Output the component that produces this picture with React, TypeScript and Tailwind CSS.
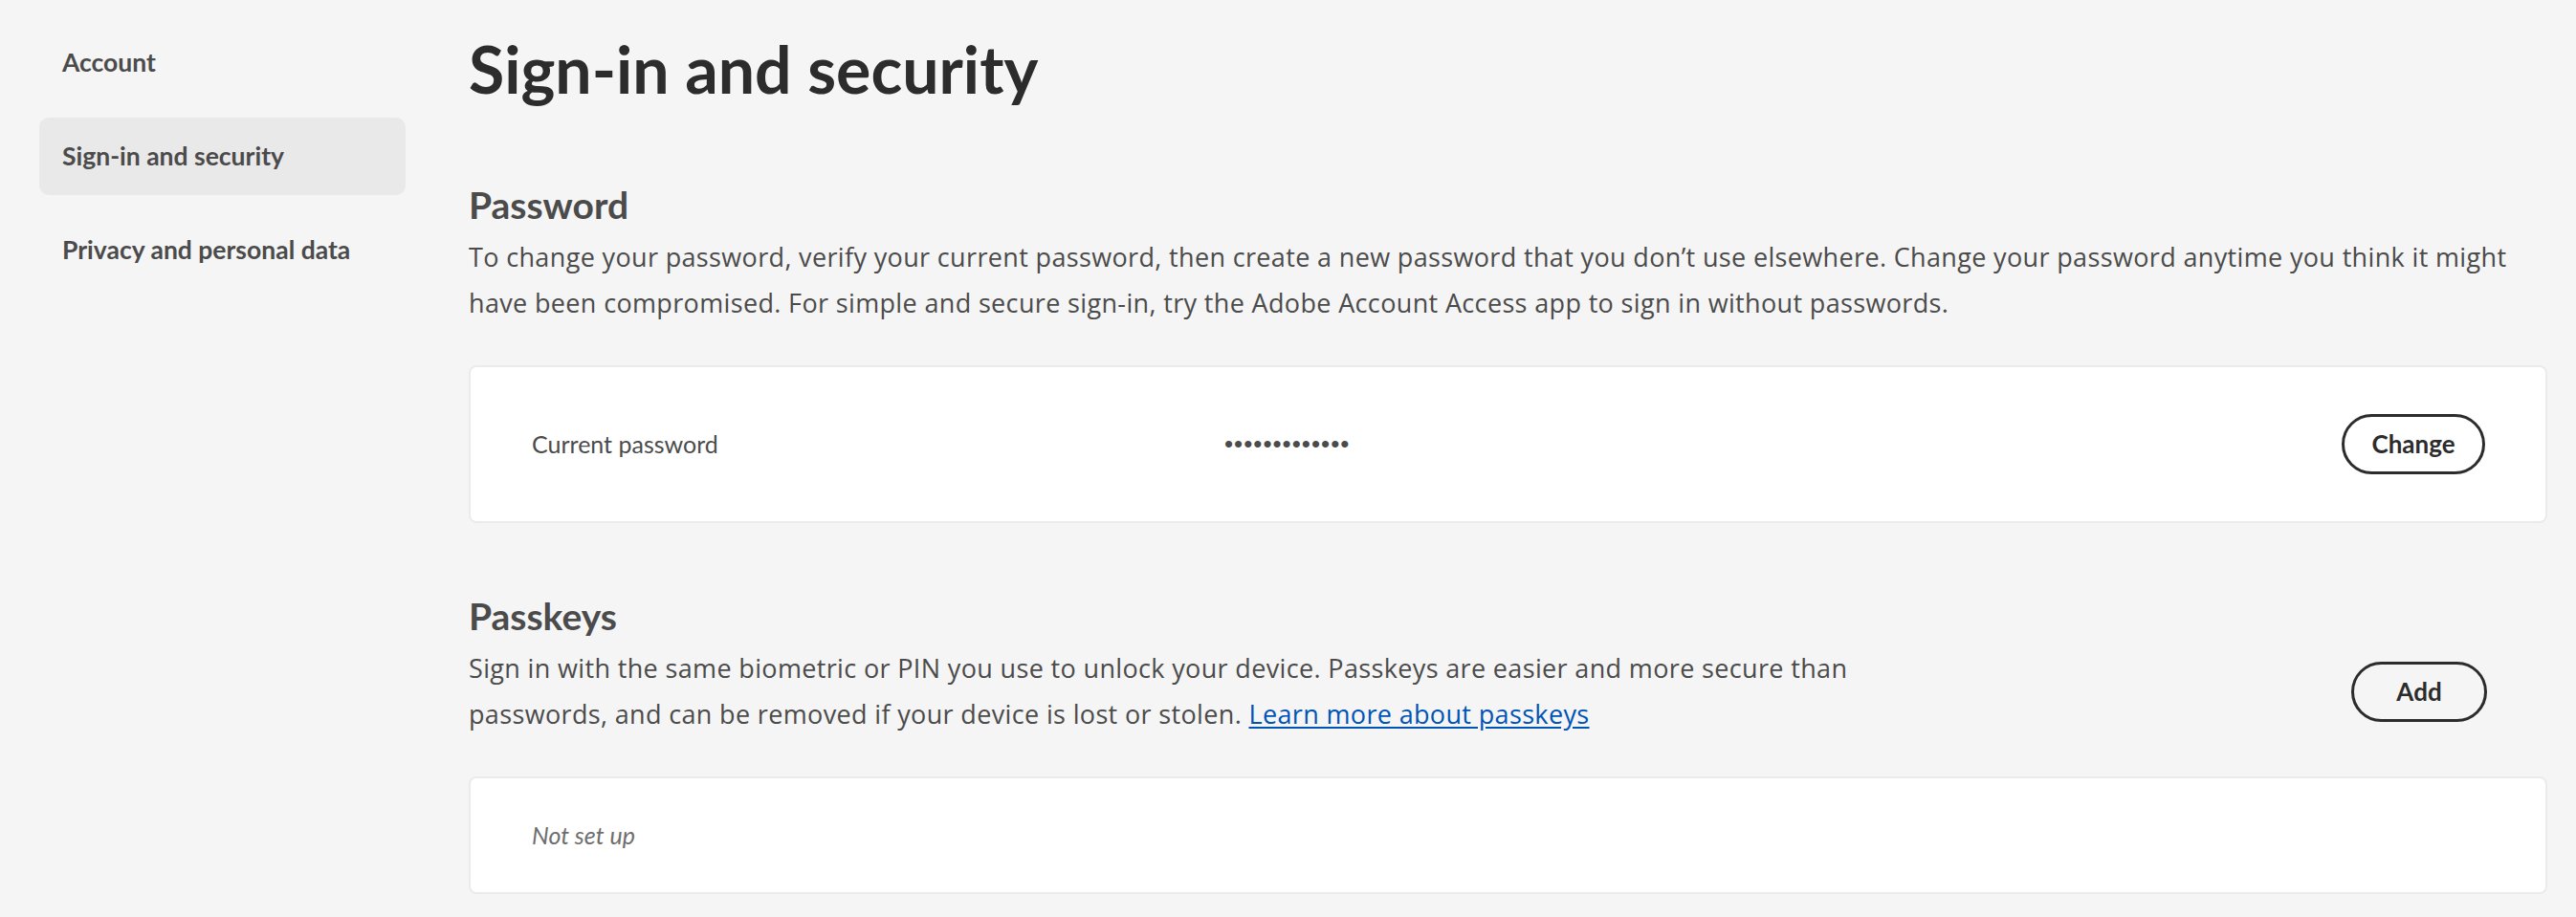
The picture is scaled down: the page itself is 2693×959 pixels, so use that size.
import React from "react";

const navItems = [
  { label: "Account", active: false },
  { label: "Sign-in and security", active: true },
  { label: "Privacy and personal data", active: false },
];

function PillButton({ label, width }: { label: string; width: string }) {
  return (
    <button
      className={`${width} h-[63px] shrink-0 rounded-full border-[3px] border-[#2c2c2c] bg-transparent text-[26px] font-bold text-[#2c2c2c] flex items-center justify-center`}
    >
      {label}
    </button>
  );
}

export default function App() {
  return (
    <div className="min-h-screen w-full bg-[#f5f5f5] flex font-['Lato',_'Noto_Sans',_sans-serif] text-[#4b4b4b]">
      {/* side nav */}
      <aside className="w-[424px] shrink-0 pl-[41px] pt-[25px]">
        <nav className="flex flex-col gap-[17px]">
          {navItems.map((item) => (
            <div
              key={item.label}
              className={`h-[81px] rounded-[10px] px-[24px] flex items-center text-[26.5px] font-bold ${
                item.active ? "bg-[#e9e9e9]" : ""
              }`}
            >
              {item.label}
            </div>
          ))}
        </nav>
      </aside>

      {/* main content */}
      <main className="flex-1 ml-[66px] mr-[30px] pt-[30px]">
        <h1 className="text-[68px] leading-[84px] font-bold text-[#2c2c2c]">Sign-in and security</h1>

        {/* Password */}
        <section className="mt-[77px]">
          <h2 className="text-[39px] leading-[46px] font-bold">Password</h2>
          <p className="mt-[8px] text-[27px] leading-[48px] tracking-[0.35px] font-['Open_Sans',_sans-serif]">
            To change your password, verify your current password, then create a new password that you don’t use
            elsewhere. Change your password anytime you think it might have been compromised. For simple and secure
            sign-in, try the Adobe Account Access app to sign in without passwords.
          </p>
          <div className="mt-[41px] h-[165px] bg-white border-2 border-[#ebebeb] rounded-[8px] flex items-center pl-[64px] pr-[63px]">
            <div className="w-[724px] shrink-0">
              <span className="text-[25px]">Current password</span>
            </div>
            <div className="flex-1">
              <span className="text-[26px] font-['Liberation_Sans',_sans-serif] tracking-[1px]">•••••••••••••</span>
            </div>
            <PillButton label="Change" width="w-[150px]" />
          </div>
        </section>

        {/* Passkeys */}
        <section className="mt-[74px]">
          <h2 className="text-[39px] leading-[46px] font-bold">Passkeys</h2>
          <div className="mt-[8px] flex items-center justify-between pr-[63px]">
            <p className="w-[1500px] text-[27px] leading-[48px] tracking-[0.35px] font-['Open_Sans',_sans-serif]">
              Sign in with the same biometric or PIN you use to unlock your device. Passkeys are easier and more
              secure than passwords, and can be removed if your device is lost or stolen.{" "}
              <a href="#" className="text-[#0054b6] underline underline-offset-[3px]">
                Learn more about passkeys
              </a>
            </p>
            <PillButton label="Add" width="w-[142px]" />
          </div>
          <div className="mt-[41px] h-[123px] bg-white border-2 border-[#ebebeb] rounded-[8px] flex items-center pl-[64px]">
            <span className="text-[25px] italic text-[#6e6e6e]">Not set up</span>
          </div>
        </section>
      </main>
    </div>
  );
}
